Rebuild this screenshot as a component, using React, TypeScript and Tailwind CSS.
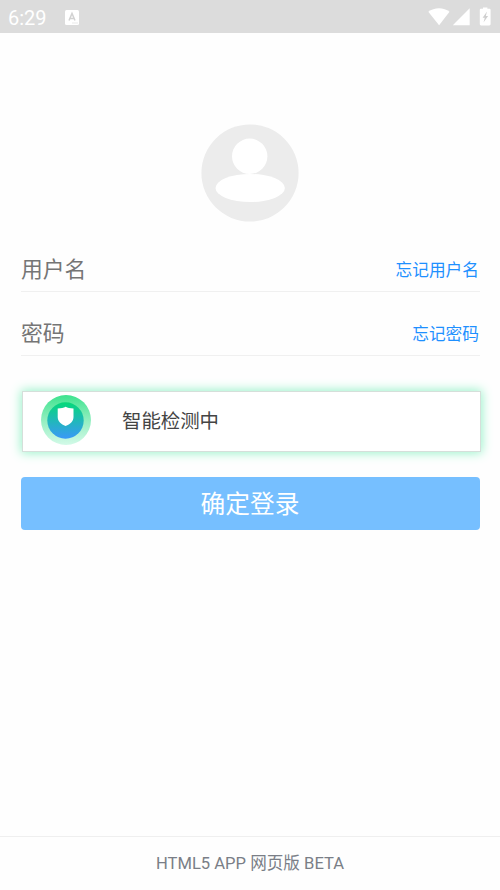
import React, { useState } from 'react';

const StatusBar: React.FC = () => (
  <div className="flex h-[33px] shrink-0 items-center justify-between bg-[#dcdcdc] pt-px pl-[8px] pr-[9px] text-white">
    <div className="flex items-center gap-[18px]">
      <span className="pt-[2px] text-[20px] leading-none">6:29</span>
      <svg width="14" height="15" viewBox="0 0 14 15">
        <rect width="14" height="15" rx="1.5" fill="#fff" />
        <path d="M4 10.5 7 3.5l3 7M5 8.5h4" fill="none" stroke="#d2d2d2" strokeWidth="1.5" />
        <path d="M7.5 13h1M9.5 13h1M11.5 13h1" stroke="#d2d2d2" strokeWidth="1" />
      </svg>
    </div>
    <svg width="63" height="20" viewBox="0 0 63 20" fill="#fff">
      <path d="M.3 4.8C6-.1 16-.1 21.5 4.8L11.1 18.3Z" />
      <path d="M41.7 1.3V18.2H24.8Z" />
      <path d="M55 1.8V.6h4.4v1.2h1.9c.8 0 1.3.5 1.3 1.3v14c0 .8-.5 1.3-1.3 1.3h-8.2c-.8 0-1.3-.5-1.3-1.3v-14c0-.8.5-1.3 1.3-1.3Z" />
      <path d="m59 4.6-4.4 6.2h2.2l-1.3 4.8 4.6-6.6h-2.3Z" fill="#cfcfcf" />
    </svg>
  </div>
);

const Avatar: React.FC = () => (
  <svg className="mt-[91px] -ml-px self-center" width="98" height="98" viewBox="0 0 98 98">
    <circle cx="49" cy="49" r="48.6" fill="#ececec" />
    <circle cx="48.7" cy="32.3" r="17.7" fill="#fff" />
    <ellipse cx="49.2" cy="64" rx="34.7" ry="14" fill="#fff" />
  </svg>
);

const ShieldIcon: React.FC = () => (
  <svg width="52" height="52" viewBox="0 0 52 52">
    <defs>
      <linearGradient id="ring" x1="0" y1="0" x2="0" y2="1">
        <stop offset="0" stopColor="#3de38e" />
        <stop offset="0.5" stopColor="#92eebf" />
        <stop offset="1" stopColor="#d3fae8" />
      </linearGradient>
      <linearGradient id="core" x1="0" y1="0" x2="0" y2="1">
        <stop offset="0" stopColor="#05d979" />
        <stop offset="1" stopColor="#3b98f8" />
      </linearGradient>
    </defs>
    <circle cx="26" cy="26" r="25" fill="url(#ring)" />
    <circle cx="25.5" cy="26.5" r="18.2" fill="url(#core)" />
    <path
      d="M25.6 12.8c1.8 1.1 4.6 1.6 7.9 1.6v8.6c0 4.4-3.3 7.2-7.9 9-4.6-1.8-7.9-4.6-7.9-9v-8.6c3.3 0 6.1-.5 7.9-1.6Z"
      fill="#fff"
    />
  </svg>
);

interface FieldProps {
  type: string;
  label: string;
  link: string;
  value: string;
  onChange: (value: string) => void;
}

const Field: React.FC<FieldProps> = ({ type, label, link, value, onChange }) => (
  <div className="flex h-16 items-center justify-between border-b border-[#f0f0f0] pt-[22px] pr-px">
    <input
      type={type}
      value={value}
      onChange={(e) => onChange(e.target.value)}
      placeholder={label}
      className="w-60 text-[21.8px] text-[#444] outline-none placeholder:text-[#757575]"
    />
    <a href="#" className="text-[16.7px] text-[#1e90ff]">
      {link}
    </a>
  </div>
);

const App: React.FC = () => {
  const [username, setUsername] = useState('');
  const [password, setPassword] = useState('');

  return (
    <div className="flex h-[890px] w-[500px] flex-col bg-[#fefefe] font-['Roboto','Noto_Sans_CJK_SC',sans-serif]">
      <StatusBar />
      <Avatar />

      <form className="mt-[6px] flex flex-col pr-[20px] pl-[21px]" onSubmit={(e) => e.preventDefault()}>
        <Field type="text" label="用户名" link="忘记用户名" value={username} onChange={setUsername} />
        <Field type="password" label="密码" link="忘记密码" value={password} onChange={setPassword} />

        <div className="mt-[35px] -mr-px ml-px flex h-[61px] items-center border border-[#d5dfda] bg-white pb-[3px] pl-[17px] shadow-[0_0_10px_1px_#98f3ca]">
          <ShieldIcon />
          <span className="ml-[30px] pt-[4px] text-[19.4px] text-[#444]">智能检测中</span>
        </div>

        <button
          type="submit"
          className="mt-[25px] h-[53px] rounded-[4px] bg-[#76bfff] pt-[3px] pr-px text-[24.7px] leading-none text-white"
        >
          确定登录
        </button>
      </form>

      <footer className="mt-auto flex h-[54px] items-center justify-center border-t border-[#efefef] pt-px text-[16.6px] text-[#7a7e87]">
        HTML5 APP 网页版 BETA
      </footer>
    </div>
  );
};

export default App;
